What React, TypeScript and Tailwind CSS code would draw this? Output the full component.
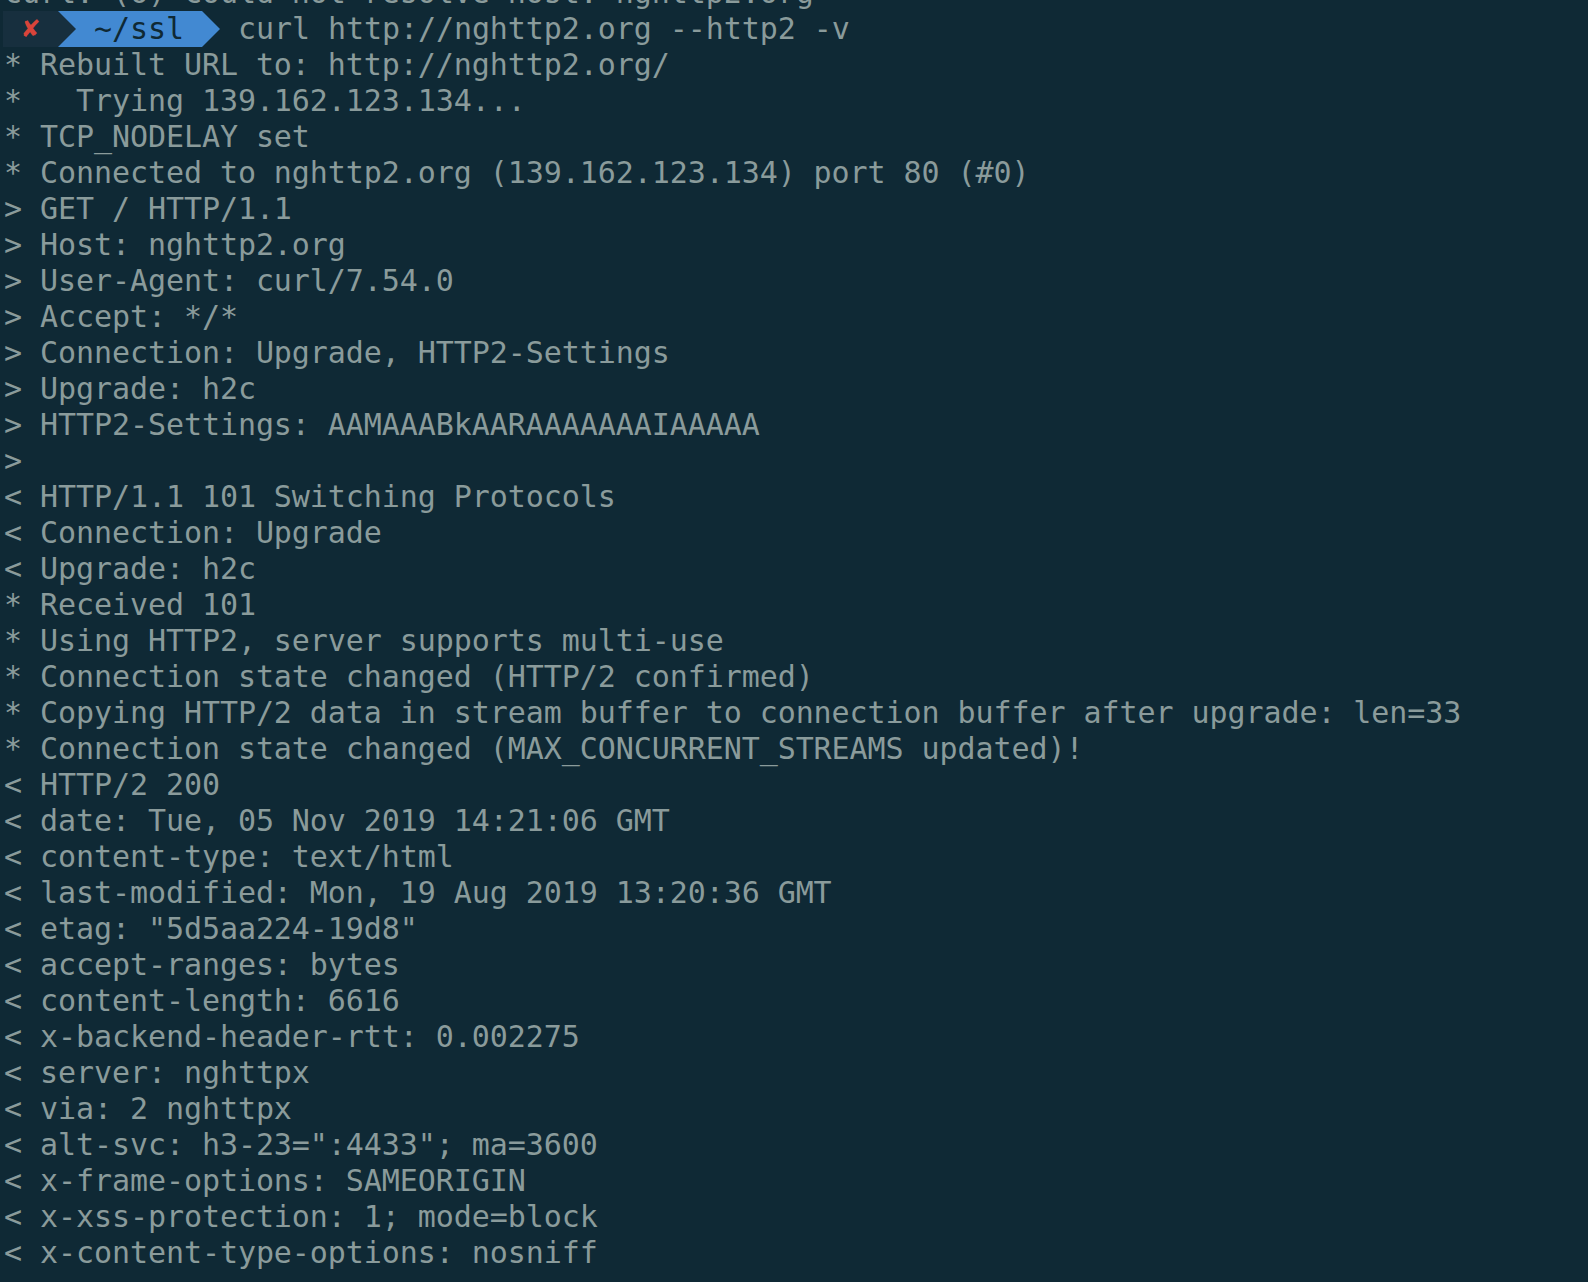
import React from "react";

const lines: string[] = [
  "* Rebuilt URL to: http://nghttp2.org/",
  "*   Trying 139.162.123.134...",
  "* TCP_NODELAY set",
  "* Connected to nghttp2.org (139.162.123.134) port 80 (#0)",
  "> GET / HTTP/1.1",
  "> Host: nghttp2.org",
  "> User-Agent: curl/7.54.0",
  "> Accept: */*",
  "> Connection: Upgrade, HTTP2-Settings",
  "> Upgrade: h2c",
  "> HTTP2-Settings: AAMAAABkAARAAAAAAAIAAAAA",
  ">",
  "< HTTP/1.1 101 Switching Protocols",
  "< Connection: Upgrade",
  "< Upgrade: h2c",
  "* Received 101",
  "* Using HTTP2, server supports multi-use",
  "* Connection state changed (HTTP/2 confirmed)",
  "* Copying HTTP/2 data in stream buffer to connection buffer after upgrade: len=33",
  "* Connection state changed (MAX_CONCURRENT_STREAMS updated)!",
  "< HTTP/2 200",
  "< date: Tue, 05 Nov 2019 14:21:06 GMT",
  "< content-type: text/html",
  "< last-modified: Mon, 19 Aug 2019 13:20:36 GMT",
  '< etag: "5d5aa224-19d8"',
  "< accept-ranges: bytes",
  "< content-length: 6616",
  "< x-backend-header-rtt: 0.002275",
  "< server: nghttpx",
  "< via: 2 nghttpx",
  '< alt-svc: h3-23=":4433"; ma=3600',
  "< x-frame-options: SAMEORIGIN",
  "< x-xss-protection: 1; mode=block",
  "< x-content-type-options: nosniff",
  "<",
];

export default function App() {
  return (
    <div className="w-full h-[1282px] overflow-hidden bg-[#0f2935] text-[#8a9b9b] text-[30px] leading-[36px] tracking-[-0.07px] font-['DejaVu_Sans_Mono','Liberation_Mono',monospace] pl-[4px]">
      <div className="mt-[-25px] flex flex-col">
        <div className="whitespace-pre h-[36px]">curl: (6) Could not resolve host: nghttp2.org</div>
        <div className="flex items-center h-[36px] whitespace-pre">
          <div className="ml-[-1px] w-[55px] h-[36px] bg-[#172f3e] flex items-center justify-center text-[#d9443a] text-[24px] font-['DejaVu_Sans',sans-serif] font-bold">
            ✘
          </div>
          <svg width="18" height="36" viewBox="0 0 18 36" className="block">
            <rect x="0" y="0" width="18" height="36" fill="#4289d2" />
            <polygon points="0,0 18,18 0,36" fill="#172f3e" />
          </svg>
          <div className="h-[36px] w-[126px] bg-[#4289d2] text-[#0f2935] flex items-center">{" ~/ssl "}</div>
          <svg width="18" height="36" viewBox="0 0 18 36" className="block">
            <polygon points="0,0 18,18 0,36" fill="#4289d2" />
          </svg>
          <span>{" curl http://nghttp2.org --http2 -v"}</span>
        </div>
        {lines.map((l, i) => (
          <div key={i} className="whitespace-pre h-[36px]">
            {l}
          </div>
        ))}
      </div>
    </div>
  );
}
